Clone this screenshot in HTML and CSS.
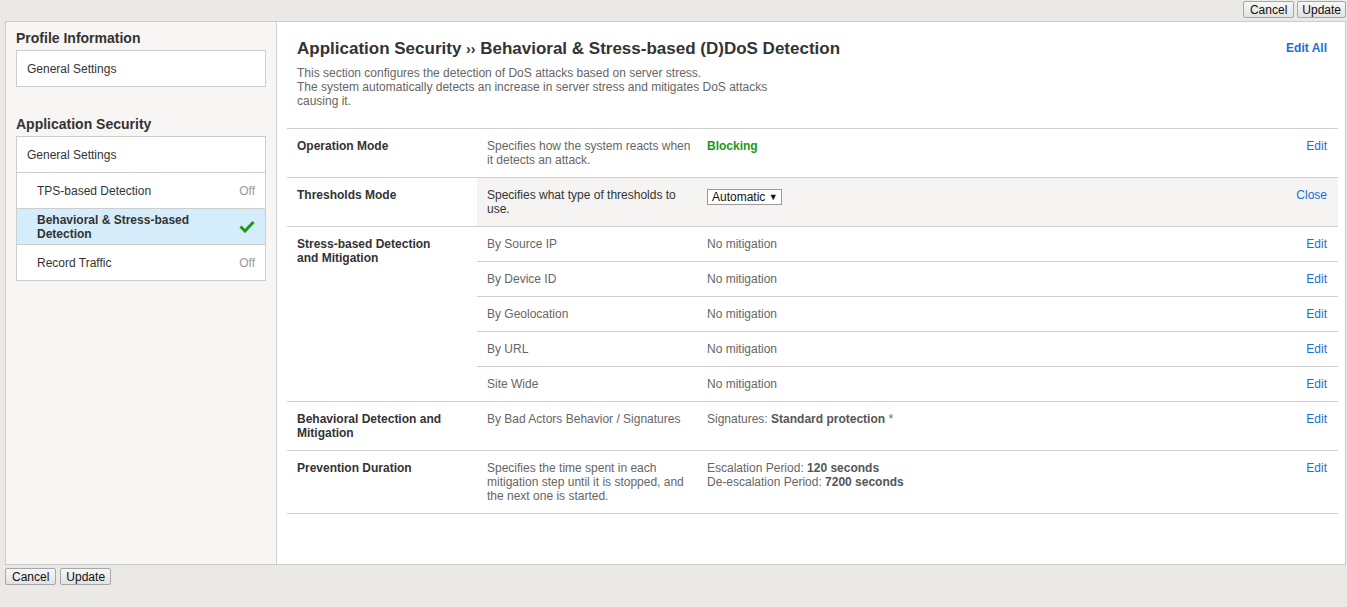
FILE: index.html
```html
<!DOCTYPE html>
<html>
<head>
<meta charset="utf-8">
<link rel="stylesheet" href="styles.css">
</head>
<body>
<div class="topbar">
  <button class="btn">Cancel</button>
  <button class="btn narrow">Update</button>
</div>
<div class="frame">
  <aside class="sidebar">
    <h2 class="side-title first">Profile Information</h2>
    <ul class="side-box">
      <li class="side-item">General Settings</li>
    </ul>
    <h2 class="side-title">Application Security</h2>
    <ul class="side-box">
      <li class="side-item">General Settings</li>
      <li class="side-item sub"><span>TPS-based Detection</span><span class="off">Off</span></li>
      <li class="side-item sub selected"><span class="sel-text">Behavioral &amp; Stress-based Detection</span>
        <svg class="check" width="16" height="13" viewBox="0 0 16 13"><path d="M1.5 6.5 L6 11 L14.5 2" fill="none" stroke="#1a9a1a" stroke-width="3"/></svg>
      </li>
      <li class="side-item sub"><span>Record Traffic</span><span class="off">Off</span></li>
    </ul>
  </aside>
  <main class="content">
    <div class="header">
      <div class="header-text">
        <h1 class="title">Application Security <span class="sep">››</span> Behavioral &amp; Stress-based (D)DoS Detection</h1>
        <p class="desc">This section configures the detection of DoS attacks based on server stress.<br>The system automatically detects an increase in server stress and mitigates DoS attacks causing it.</p>
      </div>
      <a class="link bold">Edit All</a>
    </div>
    <table class="grid">
      <colgroup><col class="c1"><col class="c2"><col class="c3"><col class="c4"></colgroup>
      <tr>
        <td class="label">Operation Mode</td>
        <td class="d">Specifies how the system reacts when it detects an attack.</td>
        <td class="v"><span class="green">Blocking</span></td>
        <td class="a"><a class="link">Edit</a></td>
      </tr>
      <tr class="open">
        <td class="label">Thresholds Mode</td>
        <td class="d dark">Specifies what type of thresholds to use.</td>
        <td class="v"><span class="select">Automatic <span class="arrow">▼</span></span></td>
        <td class="a"><a class="link">Close</a></td>
      </tr>
      <tr>
        <td class="label" rowspan="5">Stress-based Detection and Mitigation</td>
        <td class="d">By Source IP</td>
        <td class="v">No mitigation</td>
        <td class="a"><a class="link">Edit</a></td>
      </tr>
      <tr>
        <td class="d">By Device ID</td>
        <td class="v">No mitigation</td>
        <td class="a"><a class="link">Edit</a></td>
      </tr>
      <tr>
        <td class="d">By Geolocation</td>
        <td class="v">No mitigation</td>
        <td class="a"><a class="link">Edit</a></td>
      </tr>
      <tr>
        <td class="d">By URL</td>
        <td class="v">No mitigation</td>
        <td class="a"><a class="link">Edit</a></td>
      </tr>
      <tr>
        <td class="d">Site Wide</td>
        <td class="v">No mitigation</td>
        <td class="a"><a class="link">Edit</a></td>
      </tr>
      <tr>
        <td class="label">Behavioral Detection and Mitigation</td>
        <td class="d">By Bad Actors Behavior / Signatures</td>
        <td class="v">Signatures: <b>Standard protection</b> *</td>
        <td class="a"><a class="link">Edit</a></td>
      </tr>
      <tr>
        <td class="label">Prevention Duration</td>
        <td class="d">Specifies the time spent in each mitigation step until it is stopped, and the next one is started.</td>
        <td class="v">Escalation Period: <b>120 seconds</b><br>De-escalation Period: <b>7200 seconds</b></td>
        <td class="a"><a class="link">Edit</a></td>
      </tr>
    </table>
  </main>
</div>
<div class="bottombar">
  <button class="btn">Cancel</button>
  <button class="btn narrow2">Update</button>
</div>
</body>
</html>
```
FILE: styles.css
```css
* { box-sizing: border-box; }
html, body { margin: 0; padding: 0; }
body {
  background: #eae9e6;
  font-family: "Liberation Sans", Arial, sans-serif;
  font-size: 12px;
  color: #333;
  width: 1347px;
  height: 607px;
  overflow: hidden;
}
.topbar {
  height: 21px;
  display: flex;
  justify-content: flex-end;
  align-items: flex-start;
  gap: 3px;
  padding: 1px 1px 0 0;
}
.bottombar {
  display: flex;
  gap: 4px;
  padding: 3px 0 0 5px;
}
.btn {
  font-family: "Liberation Sans", Arial, sans-serif;
  font-size: 12px;
  color: #111;
  height: 17px;
  line-height: 14px;
  padding: 0 6px;
  border: 1px solid #a6a6a6;
  border-radius: 2px;
  background: linear-gradient(#f7f7f7, #e2e2e2);
  margin: 0;
}
.btn.narrow { padding: 0 4px; }
.btn.narrow2 { padding: 0 5px; }
.frame {
  margin-left: 5px;
  width: 1341px;
  height: 544px;
  border: 1px solid #cbcbcb;
  display: flex;
  background: #fff;
}
.sidebar {
  width: 271px;
  flex: none;
  background: #f7f6f4;
  border-right: 1px solid #d2d2d2;
  padding: 0 10px;
}
.side-title {
  margin: 29px 0 0;
  font-size: 14px;
  font-weight: bold;
  line-height: 17px;
  color: #333;
}
.side-title.first { margin-top: 8px; }
.side-box {
  list-style: none;
  margin: 3px 0 0;
  padding: 0;
  border: 1px solid #cdcdcd;
  background: #fff;
}
.side-item {
  height: 36px;
  display: flex;
  align-items: center;
  justify-content: space-between;
  padding: 0 10px;
  color: #333;
  border-top: 1px solid #cdcdcd;
}
.side-item:first-child { border-top: none; height: 35px; }
.side-item.sub { padding-left: 20px; }
.off { color: #999; }
.selected { background: #d5edfa; font-weight: bold; }
.sel-text { width: 170px; line-height: 14px; }
.content {
  flex: 1;
  padding: 0 7px 0 10px;
}
.header {
  display: flex;
  justify-content: space-between;
  align-items: flex-start;
  padding: 17px 11px 0 10px;
  height: 106px;
}
.title {
  margin: 0;
  font-size: 17px;
  line-height: 20px;
  font-weight: bold;
  color: #333;
}
.sep { font-size: 14px; }
.desc {
  margin: 7px 0 0;
  width: 482px;
  color: #666;
  line-height: 14px;
}
.link { color: #1a6fcf; cursor: pointer; }
.bold { font-weight: bold; margin-top: 2px; }
.grid {
  width: 100%;
  border-collapse: collapse;
  border-top: 1px solid #d0d0d0;
}
.c1 { width: 190px; }
.c2 { width: 220px; }
.c4 { width: 80px; }
.grid td {
  border-bottom: 1px solid #d0d0d0;
  padding: 10px 10px 10px;
  line-height: 14px;
  vertical-align: top;
  color: #666;
}
.grid td.label { color: #333; font-weight: bold; padding-right: 22px; }
.grid td.d { padding-right: 5px; }
.grid td.dark { color: #333; }
.grid td.a { text-align: right; padding-right: 11px; }
.grid td b { color: #555; }
.open td.d, .open td.v, .open td.a { background: #f5f4f2; }
.green { color: #1a9a1a; font-weight: bold; }
.select {
  display: inline-block;
  margin-top: 1px;
  border: 1px solid #9a9a9a;
  background: #fff;
  color: #111;
  padding: 0 3px 0 4px;
  line-height: 14px;
}
.arrow { font-size: 9px; vertical-align: 1px; }
```
